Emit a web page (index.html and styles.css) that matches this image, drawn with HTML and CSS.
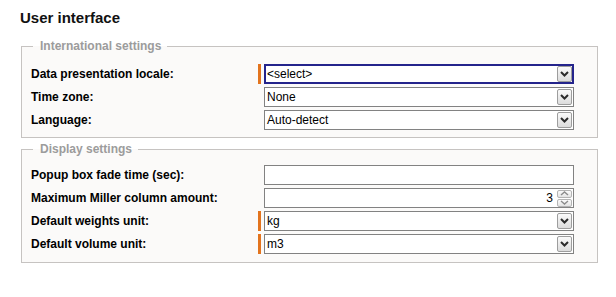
FILE: index.html
```html
<!DOCTYPE html>
<html lang="en">
<head>
    <meta charset="UTF-8">
    <title>User interface</title>
    <link rel="stylesheet" href="styles.css">
</head>
<body>
    <h1 class="page-title">User interface</h1>

    <fieldset class="group group-intl">
        <legend>International settings</legend>
        <div class="row">
            <span class="label">Data presentation locale:</span>
            <span class="marker required"></span>
            <div class="field select focused">
                <span class="value">&lt;select&gt;</span>
                <span class="drop-btn"><svg width="9" height="6" viewBox="0 0 9 6"><polyline points="1,1 4.5,4.5 8,1" fill="none" stroke="#2b2b2b" stroke-width="2"/></svg></span>
            </div>
        </div>
        <div class="row">
            <span class="label">Time zone:</span>
            <span class="marker"></span>
            <div class="field select">
                <span class="value">None</span>
                <span class="drop-btn"><svg width="9" height="6" viewBox="0 0 9 6"><polyline points="1,1 4.5,4.5 8,1" fill="none" stroke="#2b2b2b" stroke-width="2"/></svg></span>
            </div>
        </div>
        <div class="row">
            <span class="label">Language:</span>
            <span class="marker"></span>
            <div class="field select">
                <span class="value">Auto-detect</span>
                <span class="drop-btn"><svg width="9" height="6" viewBox="0 0 9 6"><polyline points="1,1 4.5,4.5 8,1" fill="none" stroke="#2b2b2b" stroke-width="2"/></svg></span>
            </div>
        </div>
    </fieldset>

    <fieldset class="group group-display">
        <legend>Display settings</legend>
        <div class="row">
            <span class="label">Popup box fade time (sec):</span>
            <span class="marker"></span>
            <div class="field text">
                <span class="value"></span>
            </div>
        </div>
        <div class="row">
            <span class="label">Maximum Miller column amount:</span>
            <span class="marker"></span>
            <div class="field number">
                <span class="value">3</span>
                <span class="spinner">
                    <span class="spin-btn"><svg width="9" height="5" viewBox="0 0 9 5"><polyline points="1,4 4.5,1 8,4" fill="none" stroke="#8c8c8c" stroke-width="1.4"/></svg></span>
                    <span class="spin-btn"><svg width="9" height="5" viewBox="0 0 9 5"><polyline points="1,1 4.5,4 8,1" fill="none" stroke="#8c8c8c" stroke-width="1.4"/></svg></span>
                </span>
            </div>
        </div>
        <div class="row">
            <span class="label">Default weights unit:</span>
            <span class="marker required"></span>
            <div class="field select">
                <span class="value">kg</span>
                <span class="drop-btn"><svg width="9" height="6" viewBox="0 0 9 6"><polyline points="1,1 4.5,4.5 8,1" fill="none" stroke="#2b2b2b" stroke-width="2"/></svg></span>
            </div>
        </div>
        <div class="row">
            <span class="label">Default volume unit:</span>
            <span class="marker required"></span>
            <div class="field select">
                <span class="value">m3</span>
                <span class="drop-btn"><svg width="9" height="6" viewBox="0 0 9 6"><polyline points="1,1 4.5,4.5 8,1" fill="none" stroke="#2b2b2b" stroke-width="2"/></svg></span>
            </div>
        </div>
    </fieldset>
</body>
</html>
```

FILE: styles.css
```css
body {
    margin: 0;
    padding: 0;
    font-family: "Liberation Sans", Arial, sans-serif;
    font-size: 12px;
    color: #000000;
    background-color: #ffffff;
}

.page-title {
    margin: 9px 0 0 20px;
    font-size: 15px;
    line-height: 17px;
    font-weight: bold;
    color: #111111;
}

/* fieldset boxes */
.group {
    margin: 0 18px 0 21px;
    border: 1px solid #c6c3c1;
    background-color: #fbfaf9;
    padding: 11px 23px 7px 9px;
    display: flex;
    flex-direction: column;
    gap: 3px;
}

.group-intl {
    margin-top: 13px;
}

.group-display {
    margin-top: 4px;
    padding-top: 9px;
    padding-bottom: 8px;
}

.group legend {
    margin-left: 2px;
    padding: 0 6px 0 7px;
    font-size: 12px;
    line-height: 14px;
    font-weight: bold;
    color: #9c9c9c;
}

.row {
    display: grid;
    grid-template-columns: 224px 3px 1fr;
    column-gap: 3px;
    align-items: center;
    height: 20px;
}

.label {
    font-weight: bold;
    line-height: 14px;
}

.marker {
    height: 20px;
}

.marker.required {
    background-color: #e3741e; /* orange mandatory mark */
}

/* input look-alikes */
.field {
    box-sizing: border-box;
    height: 20px;
    border: 1px solid #828282;
    background-color: #ffffff;
    display: flex;
    align-items: center;
    padding: 0 1px 0 2px;
}

.field .value {
    flex: 1;
    line-height: 14px;
    white-space: nowrap;
}

.field.focused {
    border: 2px solid #24248c;
    padding-left: 1px;
    padding-right: 0;
}

.drop-btn {
    box-sizing: border-box;
    width: 15px;
    height: 16px;
    border: 1px solid #9d9d9d;
    border-radius: 2px;
    background: linear-gradient(#fafafa, #dcdcdc);
    display: flex;
    align-items: center;
    justify-content: center;
}

.field.number .value {
    text-align: right;
    padding-right: 4px;
}

.spinner {
    display: flex;
    flex-direction: column;
    gap: 1px;
}

.spin-btn {
    box-sizing: border-box;
    width: 15px;
    height: 8px;
    border: 1px solid #b4b4b4;
    border-radius: 2px;
    background: linear-gradient(#fbfbfb, #e4e4e4);
    display: flex;
    align-items: center;
    justify-content: center;
}
```
